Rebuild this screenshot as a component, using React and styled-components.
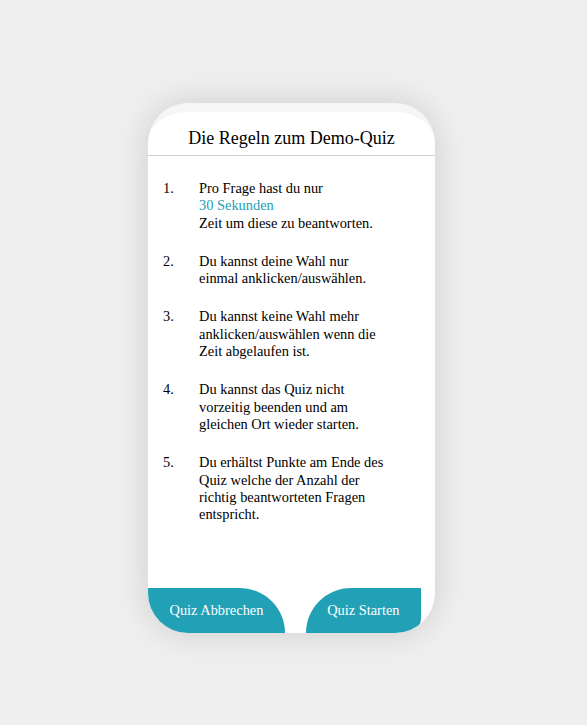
import styled, { createGlobalStyle } from "styled-components";

const GlobalStyle = createGlobalStyle`
  body {
    margin: 0;
    background: #efefef;
    font-family: "Liberation Serif", "Times New Roman", serif;
  }
`;

const Page = styled.div`
  display: flex;
  justify-content: center;
  padding: 103px 4px 0 0;
  min-height: 725px;
  box-sizing: border-box;
`;

const Card = styled.div`
  width: 287px;
  height: 530px;
  box-sizing: border-box;

  display: flex;
  flex-direction: column;
  background: #ffffff;
  border-top: 9px solid #f6f6f6;
  border-radius: 40px;
  overflow: hidden;
  box-shadow: 0 0 34px rgba(0, 0, 0, 0.14);
`;

const Header = styled.h1`
  margin: 0;
  padding: 15px 0 6px;

  font-size: 18px;
  font-weight: normal;
  line-height: 22px;
  text-align: center;
  color: #000000;
  border-bottom: 1px solid #d0d0d0;
`;

const RuleList = styled.ol`
  margin: 0;
  padding: 24px 0 0 15px;
  list-style: none;

  display: flex;
  flex-direction: column;
  gap: 21px;
`;

const Rule = styled.li`
  display: flex;
  font-size: 14.4px;
  line-height: 17.3px;
  color: #000000;
`;

const RuleNumber = styled.span`
  width: 36px;
  flex-shrink: 0;
`;

const RuleText = styled.span`
  max-width: 190px;
`;

const Highlight = styled.span`
  display: block;
  color: #25a0b6;
`;

const Footer = styled.div`
  margin-top: auto;
  display: flex;
  justify-content: space-between;
`;

const Button = styled.button`
  height: 45px;
  padding: 0 21.5px;
  margin-right: ${(props) => (props.$right ? "14px" : "0")};

  font-family: inherit;
  font-size: 14.4px;
  color: #ffffff;
  background: #21a0b6;
  border: none;
  border-radius: ${(props) => (props.$right ? "45px 0 15px 0" : "0 45px 0 0")};
  cursor: pointer;
`;

const rules = [
  {
    id: 1,
    text: (
      <>
        Pro Frage hast du nur
        <Highlight>30 Sekunden</Highlight>
        Zeit um diese zu beantworten.
      </>
    ),
  },
  { id: 2, text: "Du kannst deine Wahl nur einmal anklicken/auswählen." },
  { id: 3, text: "Du kannst keine Wahl mehr anklicken/auswählen wenn die Zeit abgelaufen ist." },
  { id: 4, text: "Du kannst das Quiz nicht vorzeitig beenden und am gleichen Ort wieder starten." },
  { id: 5, text: "Du erhältst Punkte am Ende des Quiz welche der Anzahl der richtig beantworteten Fragen entspricht." },
];

export default function App() {
  return (
    <>
      <GlobalStyle />
      <Page>
        <Card>
          <Header>Die Regeln zum Demo-Quiz</Header>

          <RuleList>
            {rules.map((rule) => (
              <Rule key={rule.id}>
                <RuleNumber>{rule.id}.</RuleNumber>
                <RuleText>{rule.text}</RuleText>
              </Rule>
            ))}
          </RuleList>

          <Footer>
            <Button>Quiz Abbrechen</Button>
            <Button $right>Quiz Starten</Button>
          </Footer>
        </Card>
      </Page>
    </>
  );
}
